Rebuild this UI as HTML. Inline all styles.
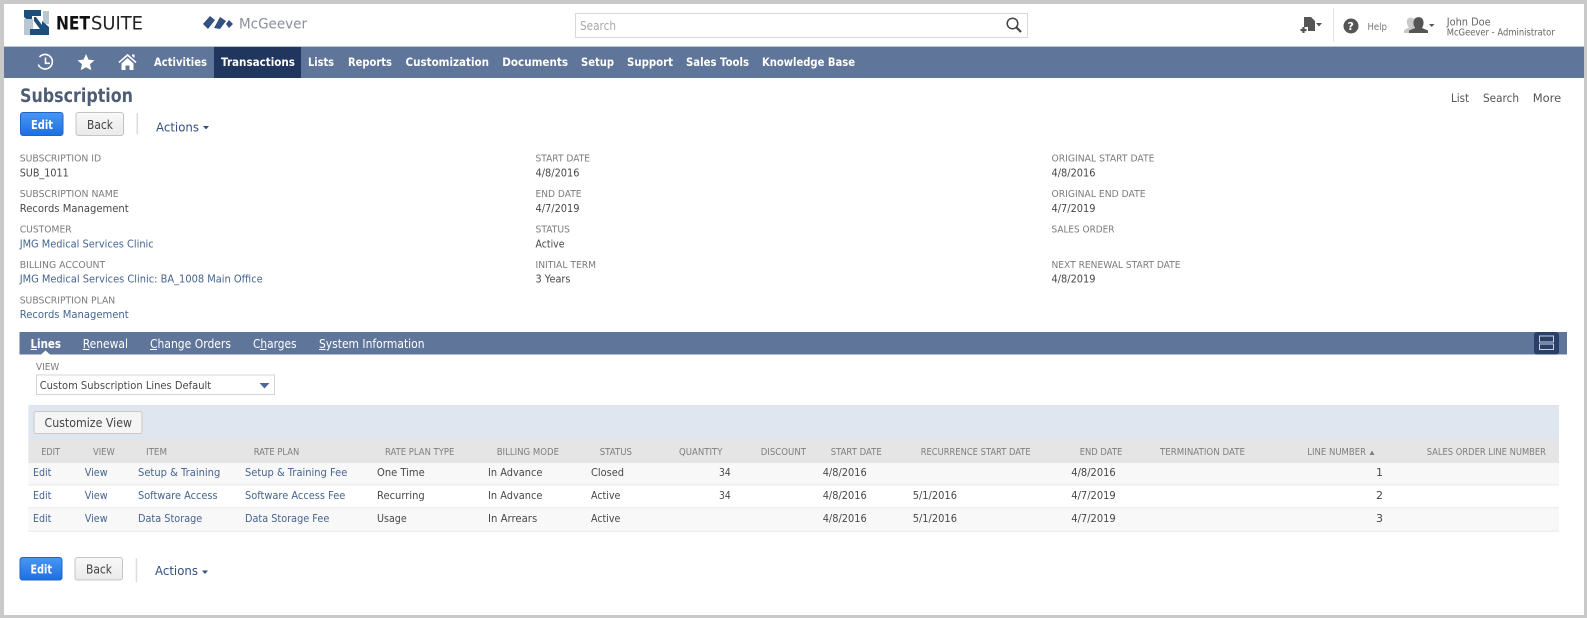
<!DOCTYPE html>
<html lang="en"><head><meta charset="utf-8"><title>Subscription</title>
<style>
html,body{margin:0;padding:0;background:#fff;width:1587px;height:618px;overflow:hidden}
svg{display:block;filter:blur(0.3px)}
text{font-family:"DejaVu Sans","Liberation Sans",sans-serif;font-size:11px;fill:#4a4a4a}
.l{fill:#7b7b7b;font-size:10px}
.v{fill:#484848;font-size:11px}
.a{fill:#46648f;font-size:11px}
.h{fill:#7f7f7f;font-size:9.5px}
.n{fill:#fff;font-size:11.8px;font-weight:bold}
.t{fill:#fff;font-size:12px}
.g{fill:#555;font-size:11.5px}
</style></head><body>
<svg xmlns="http://www.w3.org/2000/svg" width="1587" height="618" viewBox="0 0 1587 618">
<defs>
<linearGradient id="b" x1="0" y1="0" x2="0" y2="1"><stop offset="0" stop-color="#4a96f5"/><stop offset="1" stop-color="#1c6fe3"/></linearGradient>
<linearGradient id="w" x1="0" y1="0" x2="0" y2="1"><stop offset="0" stop-color="#f8f8f8"/><stop offset="1" stop-color="#eaeaea"/></linearGradient>
</defs>
<rect width="1587" height="618" fill="#c9c9c9"/>
<rect x="4" y="4" width="1580" height="611" fill="#fff"/>

<!-- logo -->
<path d="M24 10H41V16H32V24L24 17Z" fill="#1d4f7c"/>
<path d="M24 19H33V35H24Z" fill="#b9c7d3"/>
<path d="M43 11H49V24H43Z" fill="#b9c7d3"/>
<path d="M30 29H42V21L49 27V35H30Z" fill="#1d4f7c"/>
<path d="M34 17H36L42 25V29H40L34 21Z" fill="#1d4f7c"/>
<text x="56" y="29.5" textLength="34" lengthAdjust="spacingAndGlyphs" style="font-size:18.500px;font-weight:bold;fill:#111">NET</text>
<text x="91" y="29.5" textLength="52" lengthAdjust="spacingAndGlyphs" style="font-size:18.500px;fill:#222">SUITE</text>
<path d="M203 24L210 16L215 20L208 29ZM214 28L220 17L226 21L220 29ZM226 24L229 20L233 24L229 28Z" fill="#33507e"/>
<text x="239" y="28.5" textLength="68" lengthAdjust="spacingAndGlyphs" style="font-size:14px;fill:#8a9096">McGeever</text>

<!-- search -->
<rect x="575.5" y="13.5" width="452" height="24" fill="#fff" stroke="#d8d8d8"/>
<text x="580" y="30" textLength="36" lengthAdjust="spacingAndGlyphs" style="font-size:12px;fill:#a8a8a8">Search</text>
<circle cx="1012.5" cy="23.5" r="5.3" fill="none" stroke="#444" stroke-width="1.5"/>
<path d="M1016.5 27.5L1021 32" stroke="#444" stroke-width="2.2"/>

<!-- top right -->
<path d="M1304 17H1311L1315 21V31H1308V27H1304Z" fill="#555"/>
<path d="M1303.5 27V33M1300.5 30H1306.5" stroke="#555" stroke-width="2.2"/>
<path d="M1316 23H1322L1319 26.5Z" fill="#555"/>
<rect x="1333" y="8" width="1" height="34" fill="#e2e2e2"/>
<circle cx="1351" cy="26" r="7.5" fill="#555"/>
<text x="1347.5" y="30" style="font-size:11px;font-weight:bold;fill:#fff">?</text>
<text x="1367.5" y="30" textLength="19.5" lengthAdjust="spacingAndGlyphs" style="font-size:10px;fill:#777">Help</text>
<path d="M1404 33V30L1409 27.5C1407 25 1406.5 22 1407 20C1408 17 1412 17 1414 19V33Z" fill="#c9c9c9"/>
<path d="M1409 33V30.5L1415 28C1413 25 1413 21 1414.5 19C1416.5 16.5 1421 16.5 1422.5 19C1424 21 1424 25 1422 28L1428 30.5V33Z" fill="#555"/>
<path d="M1429 24H1434.5L1431.7 27Z" fill="#555"/>
<text x="1446.7" y="25.5" textLength="44" lengthAdjust="spacingAndGlyphs" style="font-size:11px;fill:#666">John Doe</text>
<text x="1446.7" y="35.5" textLength="108" lengthAdjust="spacingAndGlyphs" style="font-size:9.500px;fill:#666">McGeever - Administrator</text>

<!-- nav -->
<rect x="4" y="47" width="1580" height="31" fill="#5f7599"/>
<rect x="4" y="46" width="1580" height="1" fill="#b9c4d6"/>
<rect x="214" y="47" width="87" height="31" fill="#20365f"/>
<path d="M39.5 57A7.300 7.300 0 1 1 38.300 64.500" fill="none" stroke="#fff" stroke-width="1.600"/>
<path d="M45.5 57.500V63.300H50" fill="none" stroke="#fff" stroke-width="1.600"/>
<path d="M86 54L88.500 59.600L94.500 60.300L90 64.300L91.300 70.300L86 67.200L80.700 70.300L82 64.300L77.500 60.300L83.500 59.600Z" fill="#fff"/>
<path d="M119 62.500L127.500 55L136 62.500" fill="none" stroke="#fff" stroke-width="1.600"/>
<path d="M121.500 63.500L127.500 58L133.500 63.500V70H129.500V65.500H125.500V70H121.500Z" fill="#fff"/>
<path d="M132 54.500H134.500V58L132 56Z" fill="#fff"/>
<text class="n" x="154" y="66" textLength="53" lengthAdjust="spacingAndGlyphs">Activities</text>
<text class="n" x="221" y="66" textLength="74" lengthAdjust="spacingAndGlyphs">Transactions</text>
<text class="n" x="308" y="66" textLength="26" lengthAdjust="spacingAndGlyphs">Lists</text>
<text class="n" x="348" y="66" textLength="44" lengthAdjust="spacingAndGlyphs">Reports</text>
<text class="n" x="405.5" y="66" textLength="83.500" lengthAdjust="spacingAndGlyphs">Customization</text>
<text class="n" x="502.3" y="66" textLength="65.700" lengthAdjust="spacingAndGlyphs">Documents</text>
<text class="n" x="581" y="66" textLength="33" lengthAdjust="spacingAndGlyphs">Setup</text>
<text class="n" x="627" y="66" textLength="46" lengthAdjust="spacingAndGlyphs">Support</text>
<text class="n" x="686" y="66" textLength="63" lengthAdjust="spacingAndGlyphs">Sales Tools</text>
<text class="n" x="762" y="66" textLength="93" lengthAdjust="spacingAndGlyphs">Knowledge Base</text>

<!-- title -->
<text x="20" y="102" textLength="113" lengthAdjust="spacingAndGlyphs" style="font-size:18.500px;font-weight:bold;fill:#4d5d75">Subscription</text>
<text x="1451" y="102" textLength="18" lengthAdjust="spacingAndGlyphs" class="g">List</text>
<text x="1483" y="102" textLength="36" lengthAdjust="spacingAndGlyphs" class="g">Search</text>
<text x="1532.7" y="102" textLength="28.500" lengthAdjust="spacingAndGlyphs" class="g">More</text>

<!-- top buttons -->
<rect x="20.5" y="112.500" width="42.500" height="23" rx="2.500" fill="url(#b)" stroke="#1f66c4"/>
<text x="31" y="129" textLength="22" lengthAdjust="spacingAndGlyphs" style="font-size:12px;font-weight:bold;fill:#fff">Edit</text>
<rect x="76" y="112.500" width="47.500" height="23" rx="2.500" fill="url(#w)" stroke="#c4c4c4"/>
<text x="87" y="129" textLength="26" lengthAdjust="spacingAndGlyphs" style="font-size:12px;fill:#444">Back</text>
<rect x="136.5" y="113" width="1.500" height="21" fill="#dcdcdc"/>
<text x="156" y="131.500" textLength="43" lengthAdjust="spacingAndGlyphs" style="font-size:12.500px;fill:#34507f">Actions</text>
<path d="M203 126H209L206 129.500Z" fill="#34507f"/>

<!-- fields col 1 -->
<text class="l" x="19.7" y="161.500" textLength="81.500" lengthAdjust="spacingAndGlyphs">SUBSCRIPTION ID</text>
<text class="v" x="19.7" y="176.500" textLength="49" lengthAdjust="spacingAndGlyphs">SUB_1011</text>
<text class="l" x="19.7" y="197" textLength="99" lengthAdjust="spacingAndGlyphs">SUBSCRIPTION NAME</text>
<text class="v" x="19.7" y="212" textLength="109" lengthAdjust="spacingAndGlyphs">Records Management</text>
<text class="l" x="19.7" y="232.500" textLength="52" lengthAdjust="spacingAndGlyphs">CUSTOMER</text>
<text class="a" x="19.7" y="247.500" textLength="134" lengthAdjust="spacingAndGlyphs">JMG Medical Services Clinic</text>
<text class="l" x="19.7" y="268" textLength="85.500" lengthAdjust="spacingAndGlyphs">BILLING ACCOUNT</text>
<text class="a" x="19.7" y="282.500" textLength="243" lengthAdjust="spacingAndGlyphs">JMG Medical Services Clinic: BA_1008 Main Office</text>
<text class="l" x="19.7" y="303.500" textLength="95.500" lengthAdjust="spacingAndGlyphs">SUBSCRIPTION PLAN</text>
<text class="a" x="19.7" y="318" textLength="109" lengthAdjust="spacingAndGlyphs">Records Management</text>

<!-- fields col 2 -->
<text class="l" x="535.5" y="161.500" textLength="54.500" lengthAdjust="spacingAndGlyphs">START DATE</text>
<text class="v" x="535.5" y="176.500" textLength="44" lengthAdjust="spacingAndGlyphs">4/8/2016</text>
<text class="l" x="535.5" y="197" textLength="46" lengthAdjust="spacingAndGlyphs">END DATE</text>
<text class="v" x="535.5" y="212" textLength="44" lengthAdjust="spacingAndGlyphs">4/7/2019</text>
<text class="l" x="535.5" y="232.500" textLength="34.500" lengthAdjust="spacingAndGlyphs">STATUS</text>
<text class="v" x="535.5" y="247.500" textLength="29" lengthAdjust="spacingAndGlyphs">Active</text>
<text class="l" x="535.5" y="268" textLength="60.500" lengthAdjust="spacingAndGlyphs">INITIAL TERM</text>
<text class="v" x="535.5" y="282.500" textLength="35" lengthAdjust="spacingAndGlyphs">3 Years</text>

<!-- fields col 3 -->
<text class="l" x="1051.5" y="161.500" textLength="103" lengthAdjust="spacingAndGlyphs">ORIGINAL START DATE</text>
<text class="v" x="1051.5" y="176.500" textLength="44" lengthAdjust="spacingAndGlyphs">4/8/2016</text>
<text class="l" x="1051.5" y="197" textLength="94" lengthAdjust="spacingAndGlyphs">ORIGINAL END DATE</text>
<text class="v" x="1051.5" y="212" textLength="44" lengthAdjust="spacingAndGlyphs">4/7/2019</text>
<text class="l" x="1051.5" y="232.500" textLength="63" lengthAdjust="spacingAndGlyphs">SALES ORDER</text>
<text class="l" x="1051.5" y="268" textLength="129" lengthAdjust="spacingAndGlyphs">NEXT RENEWAL START DATE</text>
<text class="v" x="1051.5" y="282.500" textLength="44" lengthAdjust="spacingAndGlyphs">4/8/2019</text>

<!-- tabs -->
<rect x="19.5" y="332" width="1547.500" height="22.500" fill="#5f7599"/>
<text class="t" x="30.5" y="348" textLength="30.500" lengthAdjust="spacingAndGlyphs" style="font-weight:bold">Lines</text>
<text class="t" x="82.7" y="348" textLength="45.300" lengthAdjust="spacingAndGlyphs">Renewal</text>
<text class="t" x="150" y="348" textLength="81" lengthAdjust="spacingAndGlyphs">Change Orders</text>
<text class="t" x="253" y="348" textLength="43.500" lengthAdjust="spacingAndGlyphs">Charges</text>
<text class="t" x="319" y="348" textLength="105.500" lengthAdjust="spacingAndGlyphs">System Information</text>
<path d="M30.5 349.500H37M82.7 349.500H89.500M150 349.500H157M260 349.500H266.500M319 349.500H325.500" stroke="#fff" stroke-width="1"/>
<path d="M41 354.500L45.5 350.500L50 354.500Z" fill="#fff"/>
<rect x="1534" y="332" width="25" height="22.500" rx="3" fill="#2a4068"/>
<rect x="1539.5" y="336" width="14" height="6" fill="none" stroke="#c8d2e2"/>
<rect x="1539.5" y="344" width="14" height="5.500" fill="none" stroke="#c8d2e2"/>

<!-- view -->
<text class="l" x="36" y="370" textLength="23.300" lengthAdjust="spacingAndGlyphs">VIEW</text>
<rect x="36.5" y="375" width="238" height="19.500" fill="#fff" stroke="#d4d4d4"/>
<text class="v" x="39.7" y="389" textLength="171.500" lengthAdjust="spacingAndGlyphs">Custom Subscription Lines Default</text>
<path d="M259.5 383H269.5L264.5 388.500Z" fill="#4b6a97"/>

<!-- toolbar -->
<rect x="28.3" y="405" width="1530.700" height="34.500" fill="#e0e6ef"/>
<rect x="34" y="411.500" width="108" height="22" rx="2" fill="#f5f5f5" stroke="#c8c8c8"/>
<text x="44.5" y="427" textLength="87.500" lengthAdjust="spacingAndGlyphs" style="font-size:12px;fill:#444">Customize View</text>

<!-- table -->
<rect x="28.3" y="439.500" width="1530.700" height="23.500" fill="#e5e5e5"/>
<rect x="28.3" y="463" width="1530.700" height="21" fill="#f8f8f8"/>
<rect x="28.3" y="484" width="1530.700" height="1.500" fill="#eeeeee"/>
<rect x="28.3" y="485.500" width="1530.700" height="21.500" fill="#fff"/>
<rect x="28.3" y="507" width="1530.700" height="1.500" fill="#eeeeee"/>
<rect x="28.3" y="508.500" width="1530.700" height="22" fill="#f8f8f8"/>
<rect x="28.3" y="530.500" width="1530.700" height="1.500" fill="#eeeeee"/>

<text class="h" x="41.3" y="455" textLength="18.700" lengthAdjust="spacingAndGlyphs">EDIT</text>
<text class="h" x="93" y="455" textLength="21.700" lengthAdjust="spacingAndGlyphs">VIEW</text>
<text class="h" x="146" y="455" textLength="21" lengthAdjust="spacingAndGlyphs">ITEM</text>
<text class="h" x="253.7" y="455" textLength="45.600" lengthAdjust="spacingAndGlyphs">RATE PLAN</text>
<text class="h" x="385" y="455" textLength="69.300" lengthAdjust="spacingAndGlyphs">RATE PLAN TYPE</text>
<text class="h" x="496.7" y="455" textLength="62.300" lengthAdjust="spacingAndGlyphs">BILLING MODE</text>
<text class="h" x="599.7" y="455" textLength="32.300" lengthAdjust="spacingAndGlyphs">STATUS</text>
<text class="h" x="679" y="455" textLength="43.500" lengthAdjust="spacingAndGlyphs">QUANTITY</text>
<text class="h" x="760.7" y="455" textLength="45.300" lengthAdjust="spacingAndGlyphs">DISCOUNT</text>
<text class="h" x="830.7" y="455" textLength="51" lengthAdjust="spacingAndGlyphs">START DATE</text>
<text class="h" x="920.7" y="455" textLength="110" lengthAdjust="spacingAndGlyphs">RECURRENCE START DATE</text>
<text class="h" x="1079.7" y="455" textLength="42.600" lengthAdjust="spacingAndGlyphs">END DATE</text>
<text class="h" x="1160" y="455" textLength="85" lengthAdjust="spacingAndGlyphs">TERMINATION DATE</text>
<text class="h" x="1307.3" y="455" textLength="58.700" lengthAdjust="spacingAndGlyphs">LINE NUMBER</text>
<path d="M1369.5 455L1372 450.500L1374.5 455Z" fill="#7f7f7f"/>
<text class="h" x="1426.7" y="455" textLength="119.300" lengthAdjust="spacingAndGlyphs">SALES ORDER LINE NUMBER</text>

<!-- row 1 -->
<text class="a" x="33" y="476" textLength="18.400" lengthAdjust="spacingAndGlyphs">Edit</text>
<text class="a" x="84.7" y="476" textLength="23" lengthAdjust="spacingAndGlyphs">View</text>
<text class="a" x="138" y="476" textLength="82.300" lengthAdjust="spacingAndGlyphs">Setup &amp; Training</text>
<text class="a" x="245" y="476" textLength="102.300" lengthAdjust="spacingAndGlyphs">Setup &amp; Training Fee</text>
<text class="v" x="377" y="476" textLength="47.700" lengthAdjust="spacingAndGlyphs">One Time</text>
<text class="v" x="488" y="476" textLength="54.400" lengthAdjust="spacingAndGlyphs">In Advance</text>
<text class="v" x="591" y="476" textLength="33" lengthAdjust="spacingAndGlyphs">Closed</text>
<text class="v" x="719" y="476" textLength="11.700" lengthAdjust="spacingAndGlyphs">34</text>
<text class="v" x="822.7" y="476" textLength="44" lengthAdjust="spacingAndGlyphs">4/8/2016</text>
<text class="v" x="1071.3" y="476" textLength="44.400" lengthAdjust="spacingAndGlyphs">4/8/2016</text>
<text class="v" x="1376" y="476">1</text>

<!-- row 2 -->
<text class="a" x="33" y="499" textLength="18.400" lengthAdjust="spacingAndGlyphs">Edit</text>
<text class="a" x="84.7" y="499" textLength="23" lengthAdjust="spacingAndGlyphs">View</text>
<text class="a" x="138" y="499" textLength="79.600" lengthAdjust="spacingAndGlyphs">Software Access</text>
<text class="a" x="245" y="499" textLength="100.300" lengthAdjust="spacingAndGlyphs">Software Access Fee</text>
<text class="v" x="377" y="499" textLength="47.700" lengthAdjust="spacingAndGlyphs">Recurring</text>
<text class="v" x="488" y="499" textLength="54.400" lengthAdjust="spacingAndGlyphs">In Advance</text>
<text class="v" x="591" y="499" textLength="29.400" lengthAdjust="spacingAndGlyphs">Active</text>
<text class="v" x="719" y="499" textLength="11.700" lengthAdjust="spacingAndGlyphs">34</text>
<text class="v" x="822.7" y="499" textLength="44" lengthAdjust="spacingAndGlyphs">4/8/2016</text>
<text class="v" x="912.7" y="499" textLength="44.300" lengthAdjust="spacingAndGlyphs">5/1/2016</text>
<text class="v" x="1071.3" y="499" textLength="44.400" lengthAdjust="spacingAndGlyphs">4/7/2019</text>
<text class="v" x="1376" y="499">2</text>

<!-- row 3 -->
<text class="a" x="33" y="522" textLength="18.400" lengthAdjust="spacingAndGlyphs">Edit</text>
<text class="a" x="84.7" y="522" textLength="23" lengthAdjust="spacingAndGlyphs">View</text>
<text class="a" x="138" y="522" textLength="64.300" lengthAdjust="spacingAndGlyphs">Data Storage</text>
<text class="a" x="245" y="522" textLength="84.300" lengthAdjust="spacingAndGlyphs">Data Storage Fee</text>
<text class="v" x="377" y="522" textLength="29.700" lengthAdjust="spacingAndGlyphs">Usage</text>
<text class="v" x="488" y="522" textLength="49.200" lengthAdjust="spacingAndGlyphs">In Arrears</text>
<text class="v" x="591" y="522" textLength="29.400" lengthAdjust="spacingAndGlyphs">Active</text>
<text class="v" x="822.7" y="522" textLength="44" lengthAdjust="spacingAndGlyphs">4/8/2016</text>
<text class="v" x="912.7" y="522" textLength="44.300" lengthAdjust="spacingAndGlyphs">5/1/2016</text>
<text class="v" x="1071.3" y="522" textLength="44.400" lengthAdjust="spacingAndGlyphs">4/7/2019</text>
<text class="v" x="1376" y="522">3</text>

<!-- bottom buttons -->
<rect x="20" y="557.500" width="42" height="22.500" rx="2.500" fill="url(#b)" stroke="#1f66c4"/>
<text x="30.5" y="573.500" textLength="21.500" lengthAdjust="spacingAndGlyphs" style="font-size:12px;font-weight:bold;fill:#fff">Edit</text>
<rect x="75" y="557.500" width="47.500" height="22.500" rx="2.500" fill="url(#w)" stroke="#c4c4c4"/>
<text x="86" y="573.500" textLength="26" lengthAdjust="spacingAndGlyphs" style="font-size:12px;fill:#444">Back</text>
<rect x="135.7" y="558" width="1.500" height="24" fill="#dcdcdc"/>
<text x="155" y="575" textLength="43" lengthAdjust="spacingAndGlyphs" style="font-size:12.500px;fill:#34507f">Actions</text>
<path d="M202 570.500H208L205 574Z" fill="#34507f"/>
</svg>
</body></html>
